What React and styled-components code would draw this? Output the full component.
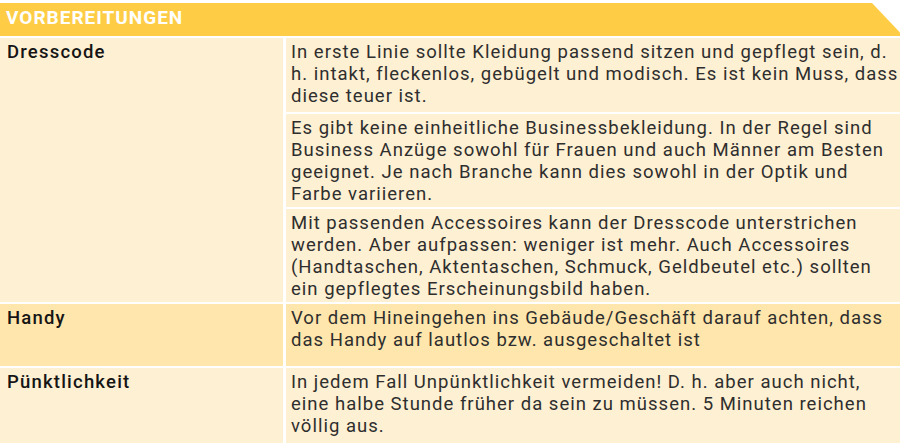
import React from "react";
import styled, { createGlobalStyle } from "styled-components";

const Global = createGlobalStyle`
  html, body { margin: 0; padding: 0; background: #ffffff; }
  body { font-family: Roboto, "Liberation Sans", sans-serif; }
`;

const Table = styled.div`
  display: grid;
  grid-template-columns: 283px 1fr;
  grid-template-rows: 33px 74px 93px 93px 62px 75px;
  column-gap: 3px;
  row-gap: 2px;
  padding-top: 3px;
  width: 900px;
`;

const Header = styled.div`
  grid-column: 1 / 3;
  background: #fecd45;
  clip-path: polygon(0 0, 872px 0, 100% 100%, 0 100%);
  color: #ffffff;
  font-weight: 700;
  font-size: 19px;
  letter-spacing: 1px;
  display: flex;
  align-items: center;
  padding: 0 0 4px 6px;
`;

const Label = styled.div`
  grid-row: ${(p) => (p.$span ? `span ${p.$span}` : "auto")};
  background: ${(p) => (p.$dark ? "#fee6ac" : "#fef0d2")};
  color: #151515;
  font-weight: 500;
  font-size: 18.5px;
  letter-spacing: 1.2px;
  line-height: 22px;
  padding: 3px 7px;
`;

const Cell = styled.div`
  background: ${(p) => (p.$dark ? "#fee6ac" : "#fef0d2")};
  color: #2e2e2e;
  font-size: 18.5px;
  letter-spacing: 1.01px;
  line-height: 22px;
  padding: 3px 5px;
`;

const Line = styled.div`
  white-space: nowrap;
`;

const Text = ({ lines }) => lines.map((l, i) => <Line key={i}>{l}</Line>);

export default function App() {
  return (
    <>
      <Global />
      <Table>
        <Header>VORBEREITUNGEN</Header>
        <Label $span={3}>Dresscode</Label>
        <Cell>
          <Text
            lines={[
              "In erste Linie sollte Kleidung passend sitzen und gepflegt sein, d.",
              "h. intakt, fleckenlos, gebügelt und modisch. Es ist kein Muss, dass",
              "diese teuer ist.",
            ]}
          />
        </Cell>
        <Cell>
          <Text
            lines={[
              "Es gibt keine einheitliche Businessbekleidung. In der Regel sind",
              "Business Anzüge sowohl für Frauen und auch Männer am Besten",
              "geeignet. Je nach Branche kann dies sowohl in der Optik und",
              "Farbe variieren.",
            ]}
          />
        </Cell>
        <Cell>
          <Text
            lines={[
              "Mit passenden Accessoires kann der Dresscode unterstrichen",
              "werden. Aber aufpassen: weniger ist mehr. Auch Accessoires",
              "(Handtaschen, Aktentaschen, Schmuck, Geldbeutel etc.) sollten",
              "ein gepflegtes Erscheinungsbild haben.",
            ]}
          />
        </Cell>
        <Label $dark>Handy</Label>
        <Cell $dark>
          <Text
            lines={[
              "Vor dem Hineingehen ins Gebäude/Geschäft darauf achten, dass",
              "das Handy auf lautlos bzw. ausgeschaltet ist",
            ]}
          />
        </Cell>
        <Label>Pünktlichkeit</Label>
        <Cell>
          <Text
            lines={[
              "In jedem Fall Unpünktlichkeit vermeiden! D. h. aber auch nicht,",
              "eine halbe Stunde früher da sein zu müssen. 5 Minuten reichen",
              "völlig aus.",
            ]}
          />
        </Cell>
      </Table>
    </>
  );
}
